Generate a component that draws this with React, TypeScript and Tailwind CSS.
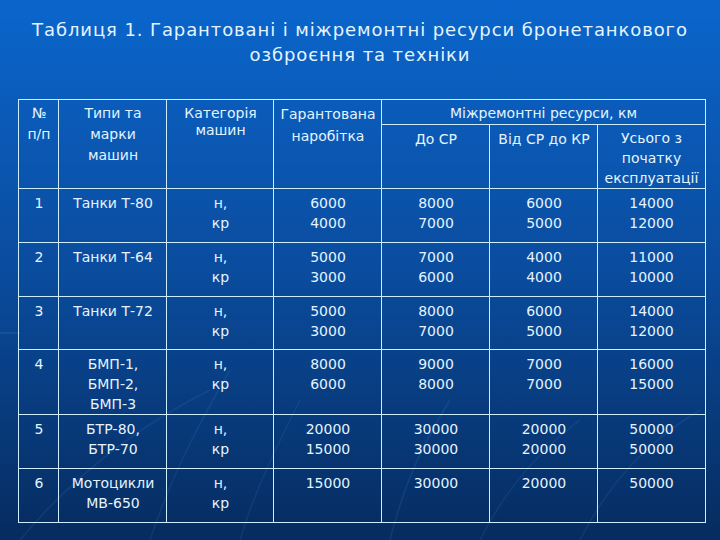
import React from "react";

type Row = {
  n: string;
  name: string[];
  cat: string[];
  g: string[];
  a: string[];
  b: string[];
  c: string[];
  h: string;
};

const rows: Row[] = [
  { n: "1", name: ["Танки Т-80"], cat: ["н,", "кр"], g: ["6000", "4000"], a: ["8000", "7000"], b: ["6000", "5000"], c: ["14000", "12000"], h: "h-[54px]" },
  { n: "2", name: ["Танки Т-64"], cat: ["н,", "кр"], g: ["5000", "3000"], a: ["7000", "6000"], b: ["4000", "4000"], c: ["11000", "10000"], h: "h-[54px]" },
  { n: "3", name: ["Танки Т-72"], cat: ["н,", "кр"], g: ["5000", "3000"], a: ["8000", "7000"], b: ["6000", "5000"], c: ["14000", "12000"], h: "h-[53px]" },
  { n: "4", name: ["БМП-1,", "БМП-2,", "БМП-3"], cat: ["н,", "кр"], g: ["8000", "6000"], a: ["9000", "8000"], b: ["7000", "7000"], c: ["16000", "15000"], h: "h-[65px]" },
  { n: "5", name: ["БТР-80,", "БТР-70"], cat: ["н,", "кр"], g: ["20000", "15000"], a: ["30000", "30000"], b: ["20000", "20000"], c: ["50000", "50000"], h: "h-[54px]" },
  { n: "6", name: ["Мотоцикли", "МВ-650"], cat: ["н,", "кр"], g: ["15000"], a: ["30000"], b: ["20000"], c: ["50000"], h: "h-[54px]" },
];

const cell = "border border-[#cdeeff] align-top text-center px-1 font-normal";

const Lines = ({ items }: { items: string[] }) => (
  <>
    {items.map((t, i) => (
      <div key={i}>{t}</div>
    ))}
  </>
);

const Streaks = () => (
  <svg className="absolute inset-0 w-full h-full pointer-events-none" viewBox="0 0 720 540" fill="none">
    <path d="M20 540 C 70 480, 130 430, 210 390" stroke="#6aa8ff" strokeOpacity="0.1" strokeWidth="1.5" />
    <path d="M150 540 C 170 480, 195 430, 230 370" stroke="#6aa8ff" strokeOpacity="0.1" strokeWidth="1.5" />
    <path d="M240 540 C 255 490, 275 450, 300 400" stroke="#6aa8ff" strokeOpacity="0.1" strokeWidth="1.5" />
    <path d="M390 540 C 405 480, 425 440, 450 400" stroke="#6aa8ff" strokeOpacity="0.12" strokeWidth="1.5" />
    <path d="M480 540 C 505 490, 540 450, 580 420" stroke="#6aa8ff" strokeOpacity="0.1" strokeWidth="1.5" />
    <path d="M580 540 C 610 480, 650 440, 700 410" stroke="#6aa8ff" strokeOpacity="0.1" strokeWidth="1.5" />
    <path d="M0 333 L 20 333" stroke="#8fc0ff" strokeOpacity="0.2" strokeWidth="1" />
  </svg>
);

const App = () => {
  return (
    <div className="relative w-[720px] h-[540px] overflow-hidden bg-gradient-to-b from-[#0a66cc] via-[#0a4c9e] to-[#062c60] text-[#e4f4ff] font-['DejaVu_Sans',sans-serif]">
      <Streaks />
      <div className="relative flex flex-col items-center">
        <h1 className="pt-[17px] text-center text-[18px] leading-[25px] tracking-[0.9px] whitespace-nowrap">
          Таблиця 1. Гарантовані і міжремонтні ресурси бронетанкового
          <br />
          озброєння та техніки
        </h1>
        <table className="mt-[32px] ml-[4px] w-[686px] table-fixed border-collapse text-[14px] leading-[20px]">
          <colgroup>
            <col className="w-[40px]" />
            <col className="w-[108px]" />
            <col className="w-[107px]" />
            <col className="w-[108px]" />
            <col className="w-[108px]" />
            <col className="w-[108px]" />
            <col className="w-[107px]" />
          </colgroup>
          <thead>
            <tr className="h-[25px]">
              <th rowSpan={2} className={`${cell} pt-[3px] leading-[21px]`}>
                <Lines items={["№", "п/п"]} />
              </th>
              <th rowSpan={2} className={`${cell} pt-[3px] leading-[21px]`}>
                <Lines items={["Типи та", "марки", "машин"]} />
              </th>
              <th rowSpan={2} className={`${cell} pt-[5px] leading-[17px]`}>
                <Lines items={["Категорія", "машин"]} />
              </th>
              <th rowSpan={2} className={`${cell} pt-[3px] leading-[22px]`}>
                <Lines items={["Гарантована", "наробітка"]} />
              </th>
              <th colSpan={3} className={`${cell} pt-[3px]`}>
                Міжремонтні ресурси, км
              </th>
            </tr>
            <tr className="h-[63px]">
              <th className={`${cell} pt-[4px]`}>До СР</th>
              <th className={`${cell} pt-[4px]`}>Від СР до КР</th>
              <th className={`${cell} pt-[3px] px-0 whitespace-nowrap`}>
                <Lines items={["Усього з", "початку", "експлуатації"]} />
              </th>
            </tr>
          </thead>
          <tbody>
            {rows.map((r) => (
              <tr key={r.n} className={r.h}>
                <td className={`${cell} pt-[4px]`}>{r.n}</td>
                <td className={`${cell} pt-[4px]`}>
                  <Lines items={r.name} />
                </td>
                <td className={`${cell} pt-[4px]`}>
                  <Lines items={r.cat} />
                </td>
                <td className={`${cell} pt-[4px]`}>
                  <Lines items={r.g} />
                </td>
                <td className={`${cell} pt-[4px]`}>
                  <Lines items={r.a} />
                </td>
                <td className={`${cell} pt-[4px]`}>
                  <Lines items={r.b} />
                </td>
                <td className={`${cell} pt-[4px]`}>
                  <Lines items={r.c} />
                </td>
              </tr>
            ))}
          </tbody>
        </table>
      </div>
    </div>
  );
};

export default App;
